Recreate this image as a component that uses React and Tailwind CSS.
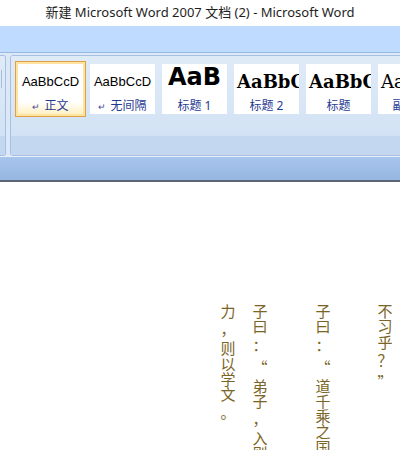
import React from "react";

const PUNCT = "，。：“”？！、；";

function Column({ text, className }) {
  return (
    <div className={`flex flex-col w-[16px] shrink-0 ${className}`}>
      {Array.from(text).map((ch, i) => (
        <span
          key={i}
          className={
            PUNCT.includes(ch)
              ? "block w-[16px] h-[22px] leading-[22px] text-center"
              : "block w-[16px] h-[15.3px] leading-[15.3px] text-center"
          }
        >
          {ch}
        </span>
      ))}
    </div>
  );
}

function StyleBox({ preview, previewClass, previewFont, label, mark, selected }) {
  return (
    <div
      className={
        selected
          ? "w-[65px] h-[50px] shrink-0 flex flex-col bg-linear-to-b from-white from-75% to-[#fff1c4] shadow-[0_0_0_2px_#ffe4a0,0_0_0_3px_#dfa04c]"
          : "w-[65px] h-[50px] shrink-0 flex flex-col bg-white"
      }
    >
      <div
        className={`h-[34px] flex items-center overflow-hidden ${previewClass}`}
        style={{ fontFamily: previewFont }}
      >
        <div className="w-full whitespace-nowrap text-center text-black">{preview}</div>
      </div>
      <div
        className="h-[16px] leading-[16px] text-center text-[12px] text-[#1f3a93] whitespace-nowrap"
        style={{ fontFamily: '"Noto Sans", "Noto Sans CJK SC", sans-serif' }}
      >
        {mark ? <span className="text-[9px] text-[#4a4aa0] mr-[4px]">↵</span> : null}
        {label}
      </div>
    </div>
  );
}

export default function App() {
  const sansF = '"Liberation Sans", Arial, sans-serif';
  const blackF = '"DejaVu Sans", sans-serif';
  const serifF = '"DejaVu Serif", serif';
  return (
    <div className="w-[400px] h-[450px] overflow-hidden bg-white flex flex-col">
      {/* title bar */}
      <div
        className="h-[26px] shrink-0 bg-white flex items-center justify-center text-[13px] text-[#1e1e1e]"
        style={{ fontFamily: '"Noto Sans", "Noto Sans CJK SC", sans-serif' }}
      >
        新建 Microsoft Word 2007 文档 (2) - Microsoft Word
      </div>
      {/* tab strip band */}
      <div className="h-[27px] shrink-0 bg-[#bfdbff] border-b border-[#99b9e6]" />
      {/* ribbon */}
      <div className="h-[103px] shrink-0 bg-[#dce8f7] pt-[2px] flex overflow-hidden">
        <div className="w-[6px] h-[101px] shrink-0 border-t border-r border-b border-[#a5c0e1] rounded-r-[3px] flex flex-col overflow-hidden">
          <div className="flex-1 bg-linear-to-b from-[#e0ebf8] to-[#d2e2f4] flex items-start pt-[14px]">
            <div className="w-[2px] h-[18px] border-r border-[#a9bfd9]" />
          </div>
          <div className="h-[19px] bg-[#c3d8f0]" />
        </div>
        <div className="w-[500px] ml-[4px] h-[101px] shrink-0 border border-[#a5c0e1] rounded-[3px] flex flex-col overflow-hidden">
          <div className="flex-1 bg-linear-to-b from-[#e0ebf8] to-[#d2e2f4] pt-[8px] pl-[7px]">
            <div className="flex gap-[7px]">
              <StyleBox
                selected
                preview="AaBbCcD"
                previewClass="text-[13px] pt-[1px]"
                previewFont={sansF}
                label="正文"
                mark
              />
              <StyleBox
                preview="AaBbCcD"
                previewClass="text-[13px] pt-[1px]"
                previewFont={sansF}
                label="无间隔"
                mark
              />
              <StyleBox
                preview="AaB"
                previewClass="text-[24px] font-bold pb-[8px]"
                previewFont={blackF}
                label="标题 1"
              />
              <StyleBox
                preview="AaBbC"
                previewClass="text-[18px] font-bold pl-[3px]"
                previewFont={serifF}
                label="标题 2"
              />
              <StyleBox
                preview="AaBbC"
                previewClass="text-[18px] font-bold pl-[3px]"
                previewFont={serifF}
                label="标题"
              />
              <StyleBox
                preview="AaBbC"
                previewClass="text-[18px] pl-[3px]"
                previewFont={serifF}
                label="副标题"
              />
            </div>
          </div>
          <div className="h-[19px] bg-[#c3d8f0]" />
        </div>
      </div>
      {/* separator bar */}
      <div className="h-[1px] shrink-0 bg-[#eaf1fb]" />
      <div className="h-[23px] shrink-0 bg-linear-to-b from-[#a7c5ec] to-[#97b6e0]" />
      <div className="h-[2px] shrink-0 bg-[#5b6475]" />
      {/* document */}
      <div
        className="flex-1 bg-white flex justify-end items-start pt-[121px] pr-[7px] text-[15px] text-[#7a6526] overflow-hidden"
        style={{ fontFamily: '"Noto Sans CJK SC", sans-serif' }}
      >
        <Column text="力，则以学文。" />
        <Column className="ml-[16px]" text="子曰：“弟子，入则孝，出则悌，谨而信，泛爱众，而亲仁。行有余" />
        <Column className="ml-[47px]" text="子曰：“道千乘之国，敬事而信，节用而爱人，使民以时。”" />
        <Column className="ml-[46px]" text="不习乎？”" />
      </div>
    </div>
  );
}
